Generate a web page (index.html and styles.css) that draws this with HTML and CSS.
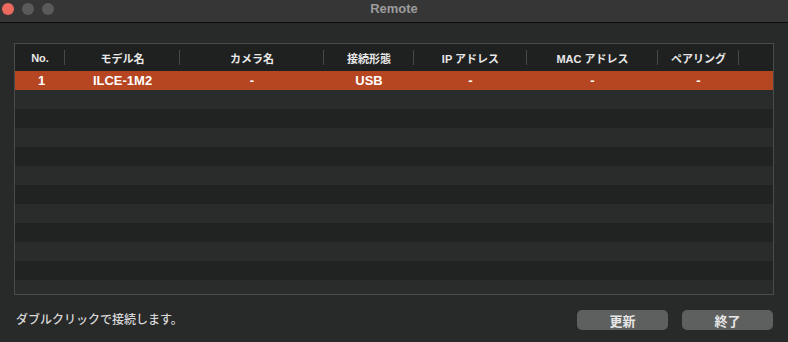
FILE: index.html
```html
<!DOCTYPE html>
<html lang="ja">
<head>
  <meta charset="UTF-8">
  <meta name="viewport" content="width=device-width, initial-scale=1.0">
  <link rel="stylesheet" href="styles.css">
  <title>Remote</title>
</head>
<body>
  <div id="window">
    <div class="titlebar">
      <div class="lights">
        <span class="light close"></span>
        <span class="light"></span>
        <span class="light"></span>
      </div>
      <div class="title">Remote</div>
    </div>

    <div class="content">
      <div class="table">
        <div class="row head">
          <div class="cell sep">No.</div>
          <div class="cell sep">モデル名</div>
          <div class="cell sep">カメラ名</div>
          <div class="cell sep">接続形態</div>
          <div class="cell sep">IP アドレス</div>
          <div class="cell sep">MAC アドレス</div>
          <div class="cell sep">ペアリング</div>
          <div class="cell"></div>
        </div>
        <div class="rows">
          <div class="row selected">
            <div class="cell">1</div>
            <div class="cell">ILCE-1M2</div>
            <div class="cell">-</div>
            <div class="cell">USB</div>
            <div class="cell">-</div>
            <div class="cell">-</div>
            <div class="cell">-</div>
            <div class="cell"></div>
          </div>
          <div class="row"></div>
          <div class="row"></div>
          <div class="row"></div>
          <div class="row"></div>
          <div class="row"></div>
          <div class="row"></div>
          <div class="row"></div>
          <div class="row"></div>
          <div class="row"></div>
          <div class="row"></div>
          <div class="row"></div>
        </div>
      </div>

      <div class="footer">
        <div class="hint">ダブルクリックで接続します。</div>
        <div class="buttons">
          <button>更新</button>
          <button>終了</button>
        </div>
      </div>
    </div>
  </div>
</body>
</html>
```

FILE: styles.css
```css
body {
  font-family: 'Liberation Sans', 'Noto Sans CJK JP', sans-serif;
  margin: 0;
  background: #282929;
}

#window {
  width: 788px;
  height: 342px;
  background: #282929;
  overflow: hidden;
}

.titlebar {
  height: 22px;
  background: #363636;
  border-bottom: 1px solid #0e0e0e;
  display: flex;
  align-items: center;
  position: relative;
}

.lights {
  display: flex;
  gap: 8px;
  padding-left: 2px;
  margin-top: -4px;
}

.light {
  width: 12px;
  height: 12px;
  border-radius: 50%;
  background: #5a5a5a;
}

.light.close {
  background: #ec6a5e;
}

.title {
  position: absolute;
  left: 0;
  right: 0;
  top: 1px;
  text-align: center;
  font-size: 13px;
  font-weight: bold;
  color: #9c9c9c;
}

.content {
  padding: 20px 14px 0 14px;
}

.table {
  width: 758px;
  border: 1px solid #4a4b4b;
}

.row {
  display: grid;
  grid-template-columns: 50px 115px 144px 90px 113px 131px 81px 1fr;
  height: 19px;
  background: #2a2b2b;
}

.rows {
  height: 223px;
  overflow: hidden;
}

.rows .row:nth-child(odd) {
  background: #212222;
}

.rows .row.selected {
  background: #b54621;
}

.row.head {
  height: 27px;
  background: #1f2020;
}

.cell {
  display: flex;
  align-items: center;
  justify-content: center;
  color: #ffffff;
  font-size: 13px;
  font-weight: bold;
  white-space: nowrap;
}

.selected .cell:first-child {
  padding-left: 3px;
}

.head .cell {
  font-size: 11px;
  color: #e8e8e8;
  position: relative;
}

.head .cell.sep::after {
  content: "";
  position: absolute;
  right: 0;
  top: 6px;
  height: 15px;
  width: 1px;
  background: #484848;
}

.footer {
  display: flex;
  justify-content: space-between;
  align-items: center;
  margin-top: 15px;
}

.hint {
  padding-left: 2px;
  font-size: 12px;
  font-weight: 500;
  color: #d8d8d8;
  margin-top: -4px;
}

.buttons {
  display: flex;
  gap: 14px;
  padding-right: 1px;
}

button {
  width: 91px;
  height: 20px;
  border: 0;
  border-radius: 5px;
  background: #5e605f;
  color: #e6e6e6;
  font-family: 'Liberation Sans', 'Noto Sans CJK JP', sans-serif;
  font-size: 13px;
  font-weight: bold;
  padding: 0;
}
```
